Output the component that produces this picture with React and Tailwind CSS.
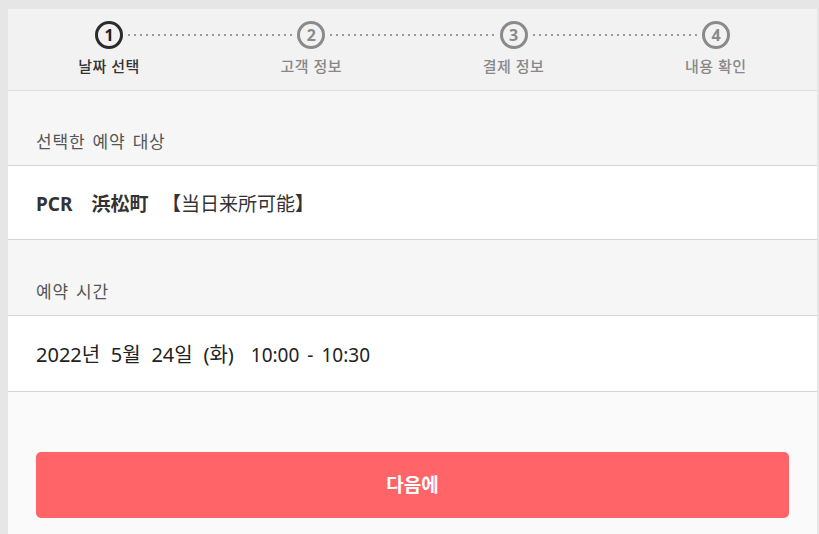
import React from "react";

const steps = ["날짜 선택", "고객 정보", "결제 정보", "내용 확인"];

function Dots() {
  return (
    <div className="flex-1 mx-[3px] h-[4px] bg-[radial-gradient(circle,#9a9a9a_1px,transparent_1.3px)] bg-size-[6px_4px] bg-repeat-x" />
  );
}

function Circle({ n, active }) {
  return (
    <div
      className={
        "w-[28px] h-[28px] rounded-full border-[3px] flex items-center justify-center text-[16px] font-bold leading-none " +
        (active ? "border-[#2b2b2b] text-[#222]" : "border-[#8a8a8a] text-[#8a8a8a]")
      }
    >
      {n}
    </div>
  );
}

export default function App() {
  return (
    <div className="w-[819px] h-[534px] overflow-hidden bg-[#e6e6e6] pt-[9px] pl-2 font-['Noto_Sans','Noto_Sans_CJK_KR',sans-serif]">
      <div className="w-[809px] h-[525px] bg-[#fafafa] flex flex-col">
        <header className="bg-[#f2f2f2] border-b border-[#dedede] h-[82px] pt-[12px]">
          <div className="flex items-center px-[87px]">
            <Circle n={1} active />
            <Dots />
            <Circle n={2} />
            <Dots />
            <Circle n={3} />
            <Dots />
            <Circle n={4} />
          </div>
          <div className="grid grid-cols-4 mt-[6px]">
            {steps.map((s, i) => (
              <div
                key={s}
                className={
                  "text-center text-[15px] font-medium tracking-[0.5px] " +
                  (i === 0 ? "text-[#333]" : "text-[#888]")
                }
              >
                {s}
              </div>
            ))}
          </div>
        </header>

        <div className="bg-[#f6f6f6] h-[75px] flex items-end px-7 pb-[11px] border-b border-[#d4d4d4]">
          <span className="text-[17px] text-[#555] tracking-[0.8px] [word-spacing:2px]">선택한 예약 대상</span>
        </div>
        <div className="bg-white h-[74px] flex items-center px-7 pt-[4px] border-b border-[#d4d4d4]">
          <span className="text-[19px] font-bold text-[#333] font-['Noto_Sans','Noto_Sans_CJK_JP',sans-serif] whitespace-pre">
            {"PCR　浜松町　"}
            <span className="ml-[4px]">
              【<span className="font-normal">当日来所可能</span>】
            </span>
          </span>
        </div>

        <div className="bg-[#f6f6f6] h-[76px] flex items-end px-7 pb-[11px] border-b border-[#d4d4d4]">
          <span className="text-[17px] text-[#555] tracking-[0.8px] [word-spacing:2px]">예약 시간</span>
        </div>
        <div className="bg-white h-[76px] flex items-center px-7 pt-[3px] border-b border-[#d4d4d4] text-[#222]">
          <span className="text-[20px] [word-spacing:5.5px]">2022년 5월 24일 (화)</span>
          <span className="ml-[17px] text-[19px]">10:00</span>
          <span className="mx-[8px] text-[19px]">-</span>
          <span className="text-[19px]">10:30</span>
        </div>

        <div className="flex-1 px-7 pt-[60px]">
          <button className="w-full h-[66px] rounded-[5px] bg-[#ff6469] text-white text-[19px] font-bold">
            다음에
          </button>
        </div>
      </div>
    </div>
  );
}
